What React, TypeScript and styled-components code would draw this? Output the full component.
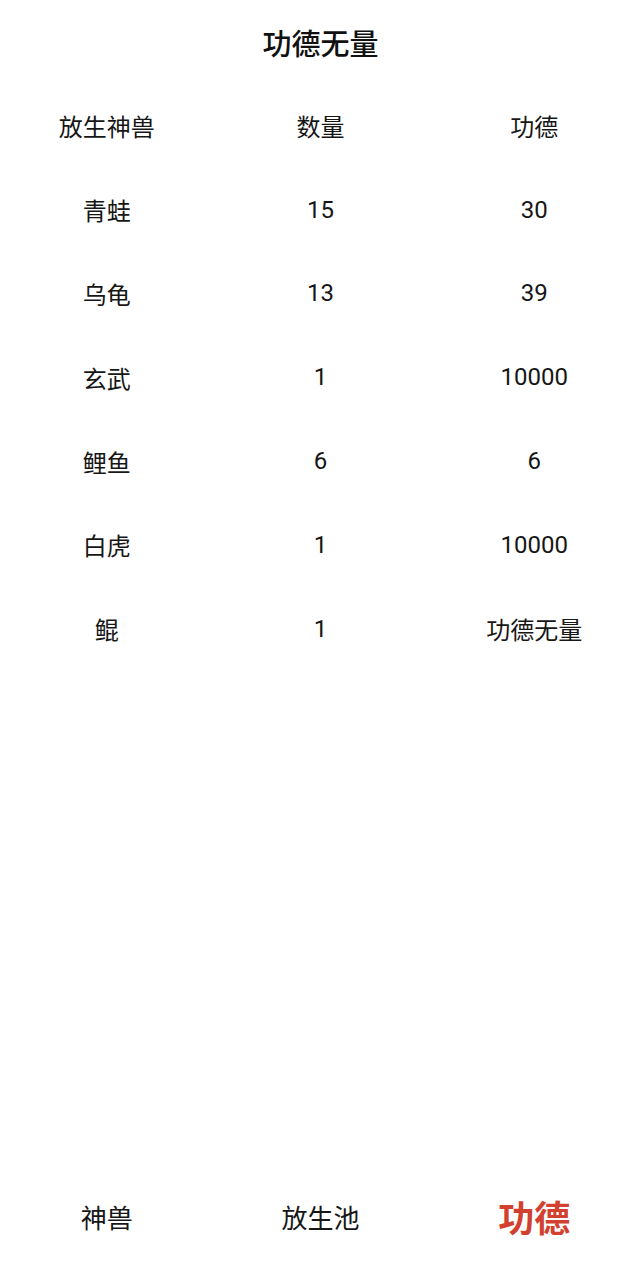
import styled, { createGlobalStyle } from "styled-components";

const GlobalStyle = createGlobalStyle`
  html, body {
    margin: 0;
    padding: 0;
    background: #ffffff;
  }
  body {
    font-family: Roboto, "Noto Sans CJK SC", sans-serif;
    color: #111111;
  }
`;

type Row = {
  name: string;
  count: string;
  merit: string;
};

const rows: Row[] = [
  { name: "青蛙", count: "15", merit: "30" },
  { name: "乌龟", count: "13", merit: "39" },
  { name: "玄武", count: "1", merit: "10000" },
  { name: "鲤鱼", count: "6", merit: "6" },
  { name: "白虎", count: "1", merit: "10000" },
  { name: "鲲", count: "1", merit: "功德无量" },
];

const tabs = ["神兽", "放生池", "功德"];

export default function App() {
  return (
    <>
      <GlobalStyle />
      <Page>
        <Title>功德无量</Title>
        <Table>
          <TableRow>
            <Cell>放生神兽</Cell>
            <Cell>数量</Cell>
            <Cell>功德</Cell>
          </TableRow>
          {rows.map((r) => (
            <TableRow key={r.name}>
              <Cell>{r.name}</Cell>
              <Cell>{r.count}</Cell>
              <Cell>{r.merit}</Cell>
            </TableRow>
          ))}
        </Table>
        <TabBar>
          {tabs.map((t, i) => (
            <Tab key={t} active={i === tabs.length - 1}>
              {t}
            </Tab>
          ))}
        </TabBar>
      </Page>
    </>
  );
}

const Page = styled.div`
  display: flex;
  flex-direction: column;
  height: 1276px;
  overflow: hidden;
`;

const Title = styled.h1`
  margin: 0;
  height: 84px;
  display: flex;
  align-items: center;
  justify-content: center;
  font-size: 29px;
  font-weight: 500;
  color: #111111;
`;

const Table = styled.div`
  display: flex;
  flex-direction: column;
  flex: 1;
`;

const TableRow = styled.div`
  display: grid;
  grid-template-columns: repeat(3, 1fr);
  height: 83.8px;
  align-items: center;
`;

const Cell = styled.div`
  text-align: center;
  font-size: 24px;
  color: #161616;
`;

const TabBar = styled.nav`
  display: grid;
  grid-template-columns: repeat(3, 1fr);
  height: 112px;
  padding-bottom: 4px;
  align-items: center;
`;

const Tab = styled.div<{ active?: boolean }>`
  text-align: center;
  font-size: ${({ active }) => (active ? "36px" : "26px")};
  font-weight: ${({ active }) => (active ? 700 : 400)};
  color: ${({ active }) => (active ? "#d2412f" : "#161616")};
`;
